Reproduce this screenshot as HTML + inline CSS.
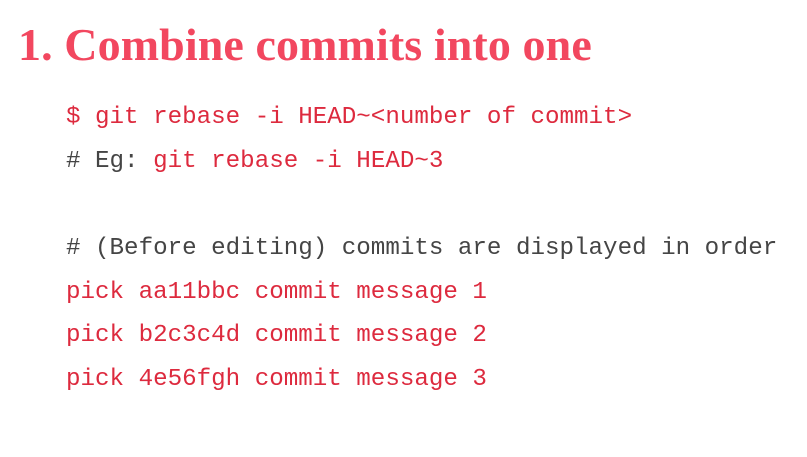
<!DOCTYPE html>
<html><head><style>
body{margin:0;width:807px;height:457px;background:#fff;overflow:hidden;position:relative}
h1{position:absolute;left:18px;top:15px;margin:0;font:bold 46px/60px "Liberation Serif",serif;color:#f2475f;letter-spacing:0.1px;white-space:nowrap}
.c{position:absolute;left:66px;font:24.2px/30px "Liberation Mono",monospace;color:#dd2a3e;white-space:pre}
.g{color:#454545}
</style></head><body>
<h1>1. Combine commits into one</h1>
<div class="c" style="top:103px">$ git rebase -i HEAD~&lt;number of commit&gt;</div>
<div class="c" style="top:147px"><span class="g"># Eg: </span>git rebase -i HEAD~3</div>
<div class="c g" style="top:234px"># (Before editing) commits are displayed in order</div>
<div class="c" style="top:278px">pick aa11bbc commit message 1</div>
<div class="c" style="top:321px">pick b2c3c4d commit message 2</div>
<div class="c" style="top:365px">pick 4e56fgh commit message 3</div>
</body></html>
